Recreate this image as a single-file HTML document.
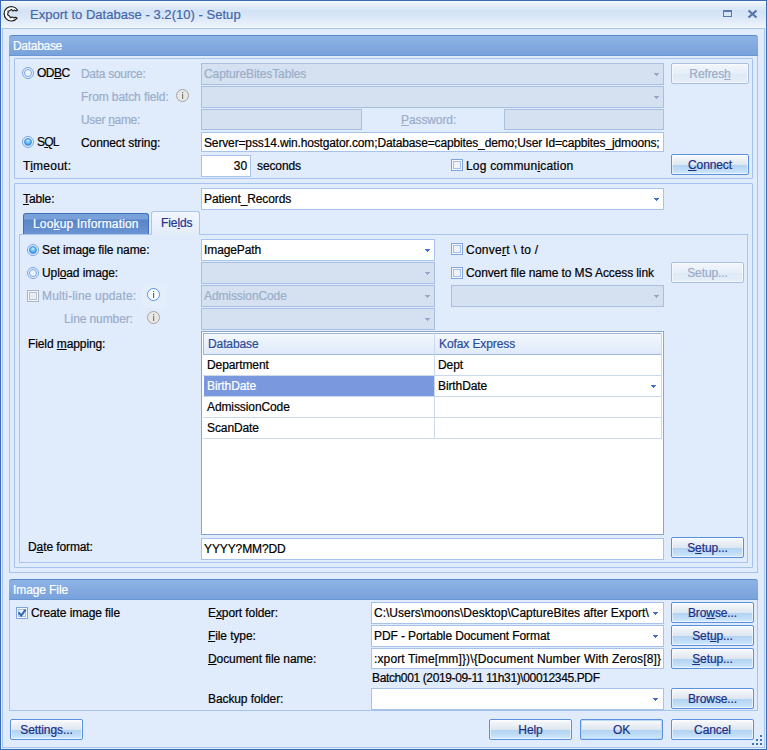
<!DOCTYPE html>
<html><head><meta charset="utf-8">
<style>
html,body{margin:0;padding:0;}
body{width:767px;height:750px;overflow:hidden;position:relative;background:#e0ebfc;font-family:"Liberation Sans",sans-serif;font-size:12px;}
*,*::before,*::after{box-sizing:border-box;}
.a{position:absolute;}
.t{position:absolute;white-space:pre;line-height:14px;height:14px;color:#000;letter-spacing:-0.1px;-webkit-text-stroke:0.2px currentColor;}
.dis{color:#9aadc9;}
.u{text-decoration:underline;text-underline-offset:1px;}
.frame{left:0;top:0;width:767px;height:750px;border:1px solid #3a6bb3;}
.title{left:1px;top:1px;width:765px;height:27px;background:linear-gradient(#f9fbfe 0px,#eaf1fa 2px,#dfeaf7 6px,#d3e3f6 10px,#d6e5f7 14px,#e2ecf9 20px,#ebf2fb 25px,#f4f7fc 27px);}
.hdr{height:21px;border-radius:3px 3px 0 0;border-top:1px solid #5a89cc;border-bottom:1px solid #6a95d2;background:linear-gradient(#8fb3e6,#78a2db);color:#fff;}
.gb{border:1px solid #a6c3ec;border-top:none;}
.box{border:1px solid #a6c3ec;border-radius:1px;}
.in{border:1px solid #a7c3ec;background:#fff;}
.in.d{background:#d5e1f0;border-color:#a9bfdf;}
.arr{position:absolute;width:5px;height:3px;--ac:#3f6ec6;background:linear-gradient(var(--ac),var(--ac)) 0 0/5px 1px no-repeat,linear-gradient(var(--ac),var(--ac)) 1px 1px/3px 1px no-repeat,linear-gradient(var(--ac),var(--ac)) 2px 2px/1px 1px no-repeat;}
.d .arr{--ac:#95a9c6;}
.btn{position:absolute;border:1px solid #5b8fe0;border-radius:2px;background:linear-gradient(#f9fbfd 0%,#eef2f7 20%,#dee6ef 50%,#b0d2f2 51%,#c4e0f8 85%,#d6eafb 100%);box-shadow:inset 0 0 0 1px rgba(255,255,255,.55);color:#1b2f86;text-align:center;line-height:19px;padding-top:1px;letter-spacing:-0.1px;-webkit-text-stroke:0.2px currentColor;}
.btn.d{border-color:#a7c0e0;background:linear-gradient(#f2f6fb 0%,#e6eef8 50%,#dde9f6 51%,#e6effa 100%);color:#9aadc9;}
.rad{position:absolute;width:12px;height:12px;border-radius:50%;border:1px solid #78a5e6;background:#e6f0fb;}
.rad::before{content:"";position:absolute;left:1px;top:1px;width:8px;height:8px;border-radius:50%;border:1px solid #7ea4da;background:linear-gradient(135deg,#f0f5fb,#e9f3fd);}
.rad.on::before{border-color:#3f88dc;background:radial-gradient(circle at 50% 30%,#d4f0ff 0,#62bdf5 45%,#2f8ce6 100%);}
.chk{position:absolute;width:12px;height:12px;border:1px solid #7ea5e0;background:#f5f8fc;}
.dc{border-color:#aab6c6;background:#f2f5f9;}
.dc::before{border-color:#b8c2d0!important;background:#e9edf3!important;}
.chk::before{content:"";position:absolute;left:1px;top:1px;width:8px;height:8px;border:1px solid #a9bfe0;background:#eef3fa;}
.info{position:absolute;width:13px;height:13px;border-radius:50%;border:1px solid #a0a8b3;background:#eef2f6;color:#a0a8b3;font-family:"Liberation Serif";font-size:10px;line-height:11px;text-align:center;}
</style></head><body>

<!-- window frame -->
<div class="a frame"></div>
<div class="a title"></div>
<div class="a" style="left:2px;top:28px;width:763px;height:720px;border:1px solid #a9c5ec;border-bottom-color:#a9c5ec;"></div>

<!-- title icon -->
<svg class="a" style="left:2px;top:4px" width="18" height="20" viewBox="0 0 18 20"><path d="M15.6 6.2 A7.2 7.2 0 1 0 15.1 14.1 L13.6 13.3 L12 13.9 L10.4 13 L8.4 13.6 L7.4 12 L6 11.2 L5.6 9.8 L6.3 8.7 L5.9 7.4 L7.6 6.8 L9.5 5.4 L11 7 L12.6 6 L14.1 6.9 Z" fill="#fff" stroke="#1e1e1e" stroke-width="1.15" stroke-linejoin="round"/></svg>
<div class="t" style="left:30px;top:7px;font-size:13px;height:15px;line-height:15px;color:#4466aa;letter-spacing:0.03px">Export to Database - 3.2(10) - Setup</div>
<!-- maximize / close -->
<div class="a" style="left:723px;top:10px;width:9px;height:7px;border:1px solid #5a78aa;border-top-width:2px;"></div>
<svg class="a" style="left:747px;top:9px" width="11" height="10" viewBox="0 0 11 10"><path d="M1.5 1.5 L9.5 8.5 M9.5 1.5 L1.5 8.5" stroke="#5774a6" stroke-width="2.2"/></svg>

<!-- ===== Database group ===== -->
<div class="a hdr" style="left:9px;top:35px;width:749px;"></div>
<div class="t" style="left:13px;top:39px;color:#fff;letter-spacing:-0.3px">Database</div>
<div class="a gb" style="left:9px;top:56px;width:749px;height:517px;"></div>
<div class="a box" style="left:14px;top:58px;width:739px;height:121px;"></div>

<div class="rad" style="left:22px;top:67px"></div>
<div class="t" style="left:37px;top:66px;letter-spacing:-0.5px">OD<span class="u">B</span>C</div>
<div class="t dis" style="left:81px;top:67px;letter-spacing:-0.3px">Data source:</div>
<div class="a in d" style="left:201px;top:63px;width:463px;height:22px;"><div class="t dis" style="left:2px;top:3px">CaptureBitesTables</div><div class="arr" style="left:452px;top:9px"></div></div>
<div class="btn d" style="left:671px;top:63px;width:78px;height:21px;">Refres<span class="u">h</span></div>

<div class="t dis" style="left:81px;top:90px">From batch field:</div>
<svg class="a" style="left:176px;top:89px" width="13" height="13" viewBox="0 0 13 13"><circle cx="6.5" cy="6.5" r="6" fill="#e9e7e3" stroke="#a3a3a3" stroke-width="1"/><rect x="6" y="3" width="1.2" height="1.2" fill="#7d7d7d"/><rect x="6" y="5" width="1.2" height="5" fill="#7d7d7d"/></svg>
<div class="a in d" style="left:201px;top:86px;width:463px;height:22px;"><div class="arr" style="left:452px;top:9px"></div></div>

<div class="t dis" style="left:81px;top:113px;letter-spacing:-0.3px">User <span class="u">n</span>ame:</div>
<div class="a in d" style="left:201px;top:109px;width:161px;height:21px;"></div>
<div class="t dis" style="left:401px;top:113px"><span class="u">P</span>assword:</div>
<div class="a in d" style="left:504px;top:109px;width:160px;height:21px;"></div>

<div class="rad on" style="left:22px;top:136px"></div>
<div class="t" style="left:37px;top:135px;letter-spacing:-0.8px">S<span class="u">Q</span>L</div>
<div class="t" style="left:81px;top:136px">Connect string:</div>
<div class="a in" style="left:201px;top:132px;width:463px;height:20px;"><div class="t" style="left:2px;top:3px;letter-spacing:-0.14px">Server=pss14.win.hostgator.com;Database=capbites_demo;User Id=capbites_jdmoons;</div></div>

<div class="t" style="left:23px;top:159px;letter-spacing:0.25px">T<span class="u">i</span>meout:</div>
<div class="a in" style="left:201px;top:155px;width:50px;height:22px;"><div class="t" style="right:3px;top:3px">30</div></div>
<div class="t" style="left:257px;top:159px">seconds</div>
<div class="chk" style="left:451px;top:159px"></div>
<div class="t" style="left:466px;top:159px;letter-spacing:0.2px">Log commun<span class="u">i</span>cation</div>
<div class="btn" style="left:671px;top:154px;width:78px;height:21px;"><span class="u">C</span>onnect</div>

<!-- Table box -->
<div class="a box" style="left:14px;top:183px;width:739px;height:385px;"></div>
<div class="t" style="left:23px;top:192px"><span class="u">T</span>able:</div>
<div class="a in" style="left:201px;top:188px;width:463px;height:22px;"><div class="t" style="left:2px;top:3px">Patient_Records</div><div class="arr" style="left:452px;top:9px"></div></div>

<!-- tabs -->
<div class="a" style="left:19px;top:234px;width:729px;height:329px;border:1px solid #a9c5ec;"></div>
<div class="a" style="left:23px;top:213px;width:126px;height:21px;border:1px solid #3f6dc0;border-bottom:none;border-radius:3px 3px 0 0;background:linear-gradient(#7ca2da 0,#7aa0d9 5px,#5885c8 6px,#6a94d3 100%);"></div>
<div class="t" style="left:33px;top:217px;color:#fff;letter-spacing:0.16px">Loo<span class="u">k</span>up Information</div>
<div class="a" style="left:151px;top:211px;width:49px;height:24px;border:1px solid #a9c5ec;border-bottom:none;border-radius:3px 3px 0 0;background:linear-gradient(#f2f7fd,#e2ecf9);"></div>
<div class="t" style="left:161px;top:216px;color:#26328c">Fie<span class="u">l</span>ds</div>

<!-- Fields panel -->
<div class="rad on" style="left:27px;top:244px"></div>
<div class="t" style="left:42px;top:243px">Set ima<span class="u">g</span>e file name:</div>
<div class="a in" style="left:201px;top:239px;width:234px;height:22px;"><div class="t" style="left:2px;top:3px">ImagePath</div><div class="arr" style="left:223px;top:9px"></div></div>
<div class="chk" style="left:451px;top:243px"></div>
<div class="t" style="left:466px;top:243px;letter-spacing:0.26px">Conve<span class="u">r</span>t \ to /</div>

<div class="rad" style="left:27px;top:267px"></div>
<div class="t" style="left:42px;top:266px">Upl<span class="u">o</span>ad image:</div>
<div class="a in d" style="left:201px;top:262px;width:234px;height:22px;"><div class="arr" style="left:223px;top:9px"></div></div>
<div class="chk" style="left:451px;top:267px"></div>
<div class="t" style="left:466px;top:266px">Convert file name to MS Access link</div>
<div class="btn d" style="left:671px;top:262px;width:73px;height:21px;">Setup...</div>

<div class="a" style="left:142px;top:285px;width:24px;height:23px;background:#e4eefb;"></div>
<div class="chk dc" style="left:27px;top:290px;"></div>
<div class="t dis" style="left:42px;top:289px;letter-spacing:0.16px">Multi-line update:</div>
<svg class="a" style="left:147px;top:288px" width="13" height="13" viewBox="0 0 13 13"><circle cx="6.5" cy="6.5" r="6" fill="#fff" stroke="#5c8fe0" stroke-width="1"/><rect x="6" y="3" width="1.2" height="1.2" fill="#3e6bbd"/><rect x="6" y="5" width="1.2" height="5" fill="#3e6bbd"/></svg>
<div class="a in d" style="left:201px;top:285px;width:234px;height:22px;"><div class="t dis" style="left:2px;top:3px">AdmissionCode</div><div class="arr" style="left:223px;top:9px"></div></div>
<div class="a in d" style="left:451px;top:285px;width:213px;height:22px;"><div class="arr" style="left:202px;top:9px"></div></div>

<div class="t dis" style="left:64px;top:312px">Line number:</div>
<svg class="a" style="left:147px;top:311px" width="13" height="13" viewBox="0 0 13 13"><circle cx="6.5" cy="6.5" r="6" fill="#e9e7e3" stroke="#a3a3a3" stroke-width="1"/><rect x="6" y="3" width="1.2" height="1.2" fill="#7d7d7d"/><rect x="6" y="5" width="1.2" height="5" fill="#7d7d7d"/></svg>
<div class="a in d" style="left:201px;top:308px;width:234px;height:22px;"><div class="arr" style="left:223px;top:9px"></div></div>

<div class="t" style="left:28px;top:337px">Field <span class="u">m</span>apping:</div>

<!-- grid -->
<div class="a" style="left:201px;top:331px;width:463px;height:204px;border:1px solid #8aa6cc;background:#fff;"></div>
<div class="a" style="left:203px;top:333px;width:459px;height:22px;border-left:1px solid #9fb6d8;border-top:1px solid #9fb6d8;border-bottom:1px solid #9db8dd;background:linear-gradient(#f3f7fd,#dfeaf9);"></div>
<div class="a" style="left:434px;top:333px;width:1px;height:105px;background:#c9d9ee;"></div>
<div class="a" style="left:203px;top:375px;width:459px;height:1px;background:#c9d9ee;"></div>
<div class="a" style="left:204px;top:376px;width:230px;height:20px;background:#7a98de;"></div>
<div class="a" style="left:203px;top:396px;width:459px;height:1px;background:#c9d9ee;"></div>
<div class="a" style="left:203px;top:417px;width:459px;height:1px;background:#c9d9ee;"></div>
<div class="a" style="left:203px;top:438px;width:459px;height:1px;background:#c9d9ee;"></div>
<div class="a" style="left:661px;top:333px;width:1px;height:105px;background:#c9d9ee;"></div>
<div class="t" style="left:208px;top:337px;color:#2a4c9a">Database</div>
<div class="t" style="left:439px;top:337px;color:#2a4c9a">Kofax Express</div>
<div class="t" style="left:207px;top:358px">Department</div>
<div class="t" style="left:438px;top:358px">Dept</div>
<div class="t" style="left:207px;top:379px;color:#fff">BirthDate</div>
<div class="t" style="left:438px;top:379px">BirthDate</div>
<div class="arr" style="left:651px;top:385px"></div>
<div class="t" style="left:207px;top:400px">AdmissionCode</div>
<div class="t" style="left:207px;top:421px">ScanDate</div>

<div class="t" style="left:28px;top:540px">D<span class="u">a</span>te format:</div>
<div class="a in" style="left:201px;top:538px;width:463px;height:22px;"><div class="t" style="left:2px;top:3px">YYYY?MM?DD</div></div>
<div class="btn" style="left:671px;top:537px;width:73px;height:21px;">S<span class="u">e</span>tup...</div>

<!-- ===== Image File group ===== -->
<div class="a hdr" style="left:9px;top:579px;width:749px;height:21px;"></div>
<div class="t" style="left:13px;top:583px;color:#fff">Image File</div>
<div class="a gb" style="left:9px;top:600px;width:749px;height:111px;"></div>

<div class="chk" style="left:16px;top:607px"></div>
<svg class="a" style="left:17px;top:608px" width="10" height="10" viewBox="0 0 10 10"><path d="M1.6 4.4 L4.2 7.6 L8.6 1.6" fill="none" stroke="#3567b5" stroke-width="2.1"/></svg>
<div class="t" style="left:31px;top:606px">Create image file</div>

<div class="t" style="left:208px;top:606px">E<span class="u">x</span>port folder:</div>
<div class="a in" style="left:371px;top:602px;width:293px;height:22px;"><div class="t" style="left:2px;top:3px;letter-spacing:0px">C:\Users\moons\Desktop\CaptureBites after Export\</div><div class="arr" style="left:281px;top:9px"></div></div>
<div class="btn" style="left:671px;top:602px;width:83px;height:21px;">Bro<span class="u">w</span>se...</div>

<div class="t" style="left:208px;top:629px"><span class="u">F</span>ile type:</div>
<div class="a in" style="left:371px;top:625px;width:293px;height:22px;"><div class="t" style="left:2px;top:3px">PDF - Portable Document Format</div><div class="arr" style="left:281px;top:9px"></div></div>
<div class="btn" style="left:671px;top:625px;width:83px;height:21px;">Set<span class="u">u</span>p...</div>

<div class="t" style="left:208px;top:652px"><span class="u">D</span>ocument file name:</div>
<div class="a in" style="left:371px;top:648px;width:293px;height:21px;overflow:hidden;"><div class="t" style="left:2px;top:3px;letter-spacing:0.13px">:xport Time[mm]})\{Document Number With Zeros[8]}</div></div>
<div class="btn" style="left:671px;top:648px;width:83px;height:21px;"><span class="u">S</span>etup...</div>

<div class="t" style="left:372px;top:671px;letter-spacing:-0.37px">Batch001 (2019-09-11 11h31)\00012345.PDF</div>

<div class="t" style="left:208px;top:692px">Backup folder:</div>
<div class="a in" style="left:371px;top:688px;width:293px;height:22px;"><div class="arr" style="left:281px;top:9px"></div></div>
<div class="btn" style="left:671px;top:688px;width:83px;height:21px;">Browse...</div>

<!-- bottom buttons -->
<div class="btn" style="left:10px;top:719px;width:73px;height:21px;">Settings...</div>
<div class="btn" style="left:489px;top:719px;width:83px;height:21px;">Help</div>
<div class="btn" style="left:580px;top:719px;width:83px;height:21px;box-shadow:inset 0 0 0 1px #b9dcfa;">OK</div>
<div class="btn" style="left:671px;top:719px;width:83px;height:21px;">Cancel</div>
<!-- grip -->
<div class="a" style="left:760px;top:735px;width:2px;height:2px;background:#3f70c2"></div>
<div class="a" style="left:756px;top:739px;width:2px;height:2px;background:#3f70c2"></div>
<div class="a" style="left:760px;top:739px;width:2px;height:2px;background:#3f70c2"></div>
<div class="a" style="left:752px;top:743px;width:2px;height:2px;background:#3f70c2"></div>
<div class="a" style="left:756px;top:743px;width:2px;height:2px;background:#3f70c2"></div>
<div class="a" style="left:760px;top:743px;width:2px;height:2px;background:#3f70c2"></div>

</body></html>
